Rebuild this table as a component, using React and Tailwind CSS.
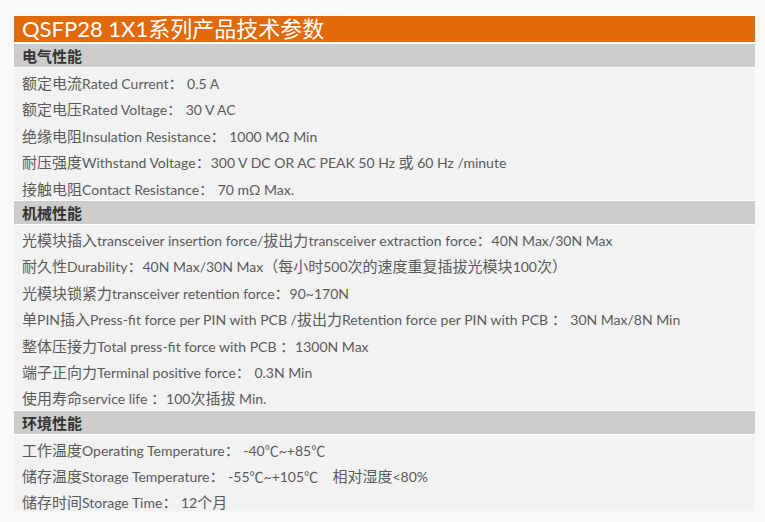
import React from "react";

const sections = [
  {
    title: "电气性能",
    rows: [
      "额定电流Rated Current： 0.5 A",
      "额定电压Rated Voltage： 30 V AC",
      "绝缘电阻Insulation Resistance： 1000 MΩ Min",
      "耐压强度Withstand Voltage：300 V DC OR AC PEAK 50 Hz 或 60 Hz /minute",
      "接触电阻Contact Resistance： 70 mΩ Max.",
    ],
  },
  {
    title: "机械性能",
    rows: [
      "光模块插入transceiver insertion force/拔出力transceiver extraction force：40N Max/30N Max",
      "耐久性Durability：40N Max/30N Max（每小时500次的速度重复插拔光模块100次）",
      "光模块锁紧力transceiver retention force：90~170N",
      "单PIN插入Press-fit force per PIN with PCB /拔出力Retention force per PIN with PCB ： 30N Max/8N Min",
      "整体压接力Total press-fit force with PCB ：1300N Max",
      "端子正向力Terminal positive force： 0.3N Min",
      "使用寿命service life ：100次插拔 Min.",
    ],
  },
  {
    title: "环境性能",
    rows: [
      "工作温度Operating Temperature： -40℃~+85℃",
      "储存温度Storage Temperature： -55℃~+105℃    相对湿度<80%",
      "储存时间Storage Time： 12个月",
    ],
  },
];

function Mixed({ text }) {
  const parts = text.split(/([\u3000-\u303f\u4e00-\u9fff\uff00-\uffef]+)/);
  return parts.map((p, i) =>
    /[\u3000-\u303f\u4e00-\u9fff\uff00-\uffef]/.test(p) ? (
      <span key={i} className="text-[15px]">
        {p}
      </span>
    ) : (
      <span key={i}>{p}</span>
    )
  );
}

export default function App() {
  return (
    <div
      className="w-[765px] h-[522px] bg-[#f8f8f8] pt-4 pl-[14px]"
      style={{ fontFamily: "Lato, 'Noto Sans CJK SC', sans-serif" }}
    >
      <div className="w-[741px] h-[495px] overflow-hidden bg-[#f2f2f2] flex flex-col">
        <div className="h-[26px] shrink-0 bg-[#e06a0c] text-white text-[22px] leading-[26px] pl-2 whitespace-nowrap">
          QSFP28 1X1系列产品技术参数
        </div>
        <div className="h-[2px] shrink-0 bg-white" />
        {sections.map((s, i) => (
          <div key={i} className="flex flex-col shrink-0">
            <div className="h-[24px] shrink-0 bg-[#cccccc] text-[#333333] font-bold text-[15px] leading-[24px] pl-2 border-b border-white">
              {s.title}
            </div>
            <div className="bg-[#f2f2f2] border-b border-white">
              {s.rows.map((r, j) => (
                <div
                  key={j}
                  className="h-[26.4px] pt-[3px] leading-[24px] pl-2 text-[14px] text-[#5a5a5a] whitespace-pre"
                >
                  <Mixed text={r} />
                </div>
              ))}
            </div>
          </div>
        ))}
      </div>
    </div>
  );
}
